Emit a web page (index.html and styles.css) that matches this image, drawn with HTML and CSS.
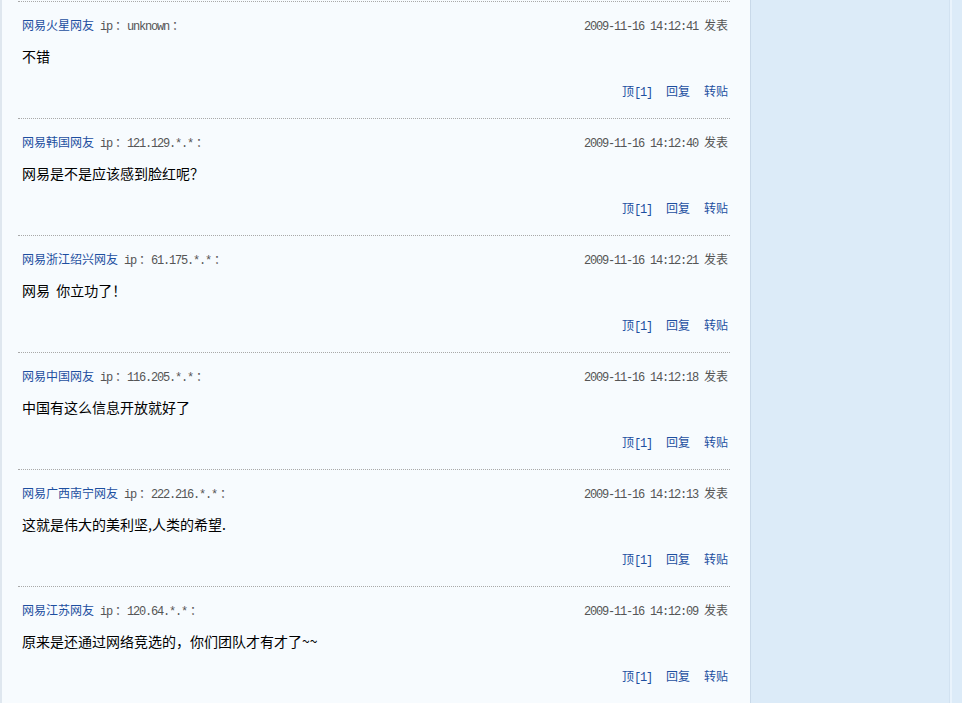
FILE: index.html
```html
<!DOCTYPE html>
<html lang="zh-CN">
<head>
<meta charset="utf-8">
<title>跟贴</title>
<link rel="stylesheet" href="styles.css">
</head>
<body>
<div class="page">
  <div class="main">
    <div class="post">
      <div class="head">
        <div class="who"><a class="name">网易火星网友</a><span class="ip">ip<span class="fw">：</span>unknown<span class="fw">：</span></span></div>
        <div class="time">2009-11-16 14:12:41 <span class="cn">发表</span></div>
      </div>
      <div class="body">不错</div>
      <div class="acts"><a class="act">顶<span class="mono">[1]</span></a><a class="act">回复</a><a class="act">转贴</a></div>
    </div>
    <div class="post">
      <div class="head">
        <div class="who"><a class="name">网易韩国网友</a><span class="ip">ip<span class="fw">：</span>121.129.*.*<span class="fw">：</span></span></div>
        <div class="time">2009-11-16 14:12:40 <span class="cn">发表</span></div>
      </div>
      <div class="body">网易是不是应该感到脸红呢？</div>
      <div class="acts"><a class="act">顶<span class="mono">[1]</span></a><a class="act">回复</a><a class="act">转贴</a></div>
    </div>
    <div class="post">
      <div class="head">
        <div class="who"><a class="name">网易浙江绍兴网友</a><span class="ip">ip<span class="fw">：</span>61.175.*.*<span class="fw">：</span></span></div>
        <div class="time">2009-11-16 14:12:21 <span class="cn">发表</span></div>
      </div>
      <div class="body">网易&nbsp;&nbsp;你立功了！</div>
      <div class="acts"><a class="act">顶<span class="mono">[1]</span></a><a class="act">回复</a><a class="act">转贴</a></div>
    </div>
    <div class="post">
      <div class="head">
        <div class="who"><a class="name">网易中国网友</a><span class="ip">ip<span class="fw">：</span>116.205.*.*<span class="fw">：</span></span></div>
        <div class="time">2009-11-16 14:12:18 <span class="cn">发表</span></div>
      </div>
      <div class="body">中国有这么信息开放就好了</div>
      <div class="acts"><a class="act">顶<span class="mono">[1]</span></a><a class="act">回复</a><a class="act">转贴</a></div>
    </div>
    <div class="post">
      <div class="head">
        <div class="who"><a class="name">网易广西南宁网友</a><span class="ip">ip<span class="fw">：</span>222.216.*.*<span class="fw">：</span></span></div>
        <div class="time">2009-11-16 14:12:13 <span class="cn">发表</span></div>
      </div>
      <div class="body">这就是伟大的美利坚,人类的希望.</div>
      <div class="acts"><a class="act">顶<span class="mono">[1]</span></a><a class="act">回复</a><a class="act">转贴</a></div>
    </div>
    <div class="post">
      <div class="head">
        <div class="who"><a class="name">网易江苏网友</a><span class="ip">ip<span class="fw">：</span>120.64.*.*<span class="fw">：</span></span></div>
        <div class="time">2009-11-16 14:12:09 <span class="cn">发表</span></div>
      </div>
      <div class="body">原来是还通过网络竞选的，你们团队才有才了~~</div>
      <div class="acts"><a class="act">顶<span class="mono">[1]</span></a><a class="act">回复</a><a class="act">转贴</a></div>
    </div>
  </div>
  <div class="side"></div>
</div>
</body>
</html>
```
FILE: styles.css
```css
html, body {
  margin: 0;
  padding: 0;
  height: 100%;
  overflow: hidden;
}
body {
  background: #dcebf8;
  font-family: "Noto Sans CJK SC", "Liberation Sans", sans-serif;
}
.page {
  display: flex;
  height: 703px;
}
.main {
  width: 748px;
  background: #f7fbfe;
  border-left: 2px solid #dfe7ef;
  border-right: 1px solid #c9d9e9;
  padding-top: 1px;
  flex: none;
}
.side {
  width: 199px;
  background: #dcebf8;
  border-right: 2px solid #e9f3fc;
  box-shadow: inset -1px 0 0 #d2e2f1;
  flex: none;
}
.post {
  margin: 0 20px 0 16px;
  padding: 0 2px 0 4px;
  border-top: 1px dotted #a9a9a9;
  height: 116px;
}
.head {
  display: flex;
  justify-content: space-between;
  align-items: center;
  padding-top: 15px;
  height: 18px;
  line-height: 18px;
}
.who {
  font-size: 12px;
  white-space: nowrap;
}
.name {
  color: #1d4fa0;
  font-size: 12px;
}
.ip {
  margin-left: 6px;
  font-family: "Liberation Mono", "Noto Sans CJK SC", monospace;
  font-size: 12px;
  letter-spacing: -1.2px;
  color: #555;
}
.ip .fw {
  font-family: "Noto Sans CJK SC", sans-serif;
  font-size: 12px;
  letter-spacing: 0;
  padding-left: 3px;
}
.time {
  font-family: "Liberation Mono", "Noto Sans CJK SC", monospace;
  font-size: 12px;
  letter-spacing: -1.2px;
  color: #555;
  white-space: nowrap;
}
.time .cn {
  font-family: "Noto Sans CJK SC", sans-serif;
  font-size: 12px;
  letter-spacing: 0;
}
.body {
  margin-top: 11px;
  height: 20px;
  line-height: 20px;
  font-size: 14px;
  color: #000;
}
.acts {
  margin-top: 16px;
  height: 18px;
  line-height: 18px;
  display: flex;
  justify-content: flex-end;
  gap: 14px;
  font-size: 12px;
}
.act {
  color: #1d4fa0;
}
.act .mono {
  font-family: "Liberation Mono", monospace;
  font-size: 12px;
  letter-spacing: -1.2px;
}
```
